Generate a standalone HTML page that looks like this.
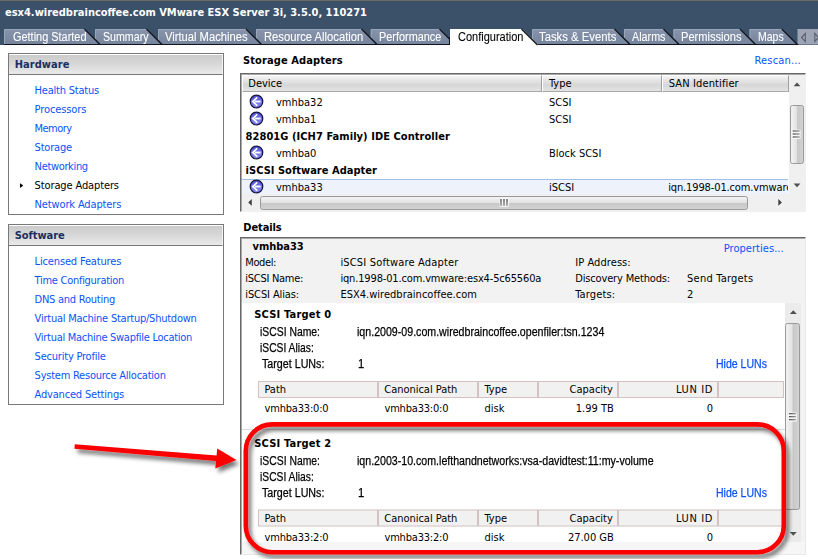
<!DOCTYPE html>
<html><head><meta charset="utf-8"><title>esx4.wiredbraincoffee.com</title>
<style>
html,body{margin:0;padding:0;}
body{width:818px;height:559px;position:relative;overflow:hidden;background:#fff;font-family:"DejaVu Sans Condensed","DejaVu Sans","Liberation Sans",sans-serif;font-size:11px;color:#000;}
.a{position:absolute;white-space:nowrap;line-height:13px;}
.b{font-weight:bold;}
.lk{color:#0c52fa;}
.ar{font-family:"Liberation Sans",sans-serif;font-size:12.5px;transform-origin:0 50%;-webkit-text-stroke:0.25px;}
#hdr{left:0;top:0;width:818px;height:45px;background:#3b5069;border-top:1px solid #6e6a68;box-sizing:border-box;}
.panel{border:1px solid #787878;box-sizing:border-box;background:#fff;}
.ph{left:0;top:0;right:0;height:20px;background:linear-gradient(#ffffff 0,#ffffff 1px,#cbcccb 1.5px,#d6d7d6 50%,#eaeaea 100%);border-bottom:1px solid #787878;border-right:1px solid #f4f4f4;}
.pt{color:#1b2f62;}
.th{background:linear-gradient(#f4f4f4,#d6d6d6 60%,#e4e4e4);box-sizing:border-box;border-right:1px solid #a0a0a0;border-bottom:1px solid #a8a8a8;border-left:1px solid #fff;border-top:1px solid #fff;height:17px;}
.th2{background:#f1f1f1;box-sizing:border-box;border:1px solid #d4c2c2;height:17px;}
</style></head><body>
<div class="a" id="hdr"></div>
<div class="a b" style="left:5px;top:6px;color:#fff">esx4.wiredbraincoffee.com VMware ESX Server 3i, 3.5.0, 110271</div>
<svg class="a" style="left:0;top:0" width="818" height="50" viewBox="0 0 818 50">
<defs><linearGradient id="tg" x1="0" y1="0" x2="0" y2="1"><stop offset="0" stop-color="#8794ab"/><stop offset="1" stop-color="#75839c"/></linearGradient></defs>
<rect x="797.5" y="29" width="21" height="15.5" fill="#9ca4b6"/>
<path d="M805.3 33.5 L801.5 37.5 L805.3 41.5 Z M814.8 33.5 L818.6 37.5 L814.8 41.5 Z" fill="none" stroke="#5a606c" stroke-width="1.1"/>
<path d="M749.5 45 L749.5 29 L782.8 29 L798.3 45 Z" fill="url(#tg)"/>
<path d="M750.0 44 L750.0 29.5 L782.8 29.5" fill="none" stroke="#9aa5b8" stroke-width="1"/>
<path d="M781.8 29 L797.3 44.5" fill="none" stroke="#10141c" stroke-width="1.4"/>
<path d="M749.5 44.5 L798.3 44.5" fill="none" stroke="#10141c" stroke-width="1"/>
<path d="M673.5 45 L673.5 29 L741.0 29 L756.5 45 Z" fill="url(#tg)"/>
<path d="M674.0 44 L674.0 29.5 L741.0 29.5" fill="none" stroke="#9aa5b8" stroke-width="1"/>
<path d="M740.0 29 L755.5 44.5" fill="none" stroke="#10141c" stroke-width="1.4"/>
<path d="M673.5 44.5 L756.5 44.5" fill="none" stroke="#10141c" stroke-width="1"/>
<path d="M624 45 L624 29 L664.5 29 L680.0 45 Z" fill="url(#tg)"/>
<path d="M624.5 44 L624.5 29.5 L664.5 29.5" fill="none" stroke="#9aa5b8" stroke-width="1"/>
<path d="M663.5 29 L679.0 44.5" fill="none" stroke="#10141c" stroke-width="1.4"/>
<path d="M624 44.5 L680.0 44.5" fill="none" stroke="#10141c" stroke-width="1"/>
<path d="M532 45 L532 29 L615.5 29 L631.0 45 Z" fill="url(#tg)"/>
<path d="M532.5 44 L532.5 29.5 L615.5 29.5" fill="none" stroke="#9aa5b8" stroke-width="1"/>
<path d="M614.5 29 L630.0 44.5" fill="none" stroke="#10141c" stroke-width="1.4"/>
<path d="M532 44.5 L631.0 44.5" fill="none" stroke="#10141c" stroke-width="1"/>
<path d="M370.7 45 L370.7 29 L440.5 29 L456.0 45 Z" fill="url(#tg)"/>
<path d="M371.2 44 L371.2 29.5 L440.5 29.5" fill="none" stroke="#9aa5b8" stroke-width="1"/>
<path d="M439.5 29 L455.0 44.5" fill="none" stroke="#10141c" stroke-width="1.4"/>
<path d="M370.7 44.5 L456.0 44.5" fill="none" stroke="#10141c" stroke-width="1"/>
<path d="M256 45 L256 29 L362.5 29 L378.0 45 Z" fill="url(#tg)"/>
<path d="M256.5 44 L256.5 29.5 L362.5 29.5" fill="none" stroke="#9aa5b8" stroke-width="1"/>
<path d="M361.5 29 L377.0 44.5" fill="none" stroke="#10141c" stroke-width="1.4"/>
<path d="M256 44.5 L378.0 44.5" fill="none" stroke="#10141c" stroke-width="1"/>
<path d="M158 45 L158 29 L247.0 29 L262.5 45 Z" fill="url(#tg)"/>
<path d="M158.5 44 L158.5 29.5 L247.0 29.5" fill="none" stroke="#9aa5b8" stroke-width="1"/>
<path d="M246.0 29 L261.5 44.5" fill="none" stroke="#10141c" stroke-width="1.4"/>
<path d="M158 44.5 L262.5 44.5" fill="none" stroke="#10141c" stroke-width="1"/>
<path d="M95 45 L95 29 L147.5 29 L163.0 45 Z" fill="url(#tg)"/>
<path d="M95.5 44 L95.5 29.5 L147.5 29.5" fill="none" stroke="#9aa5b8" stroke-width="1"/>
<path d="M146.5 29 L162.0 44.5" fill="none" stroke="#10141c" stroke-width="1.4"/>
<path d="M95 44.5 L163.0 44.5" fill="none" stroke="#10141c" stroke-width="1"/>
<path d="M4 45 L4 29 L85.5 29 L101.0 45 Z" fill="url(#tg)"/>
<path d="M4.5 44 L4.5 29.5 L85.5 29.5" fill="none" stroke="#9aa5b8" stroke-width="1"/>
<path d="M84.5 29 L100.0 44.5" fill="none" stroke="#10141c" stroke-width="1.4"/>
<path d="M4 44.5 L101.0 44.5" fill="none" stroke="#10141c" stroke-width="1"/>
<path d="M450 46 L450 29 L522.5 29 L539.5 46 Z" fill="#fff"/>
<path d="M521.5 29 L537.5 45" fill="none" stroke="#10141c" stroke-width="1.4"/>
<path d="M449.5 37 L449.5 45" fill="none" stroke="#10141c" stroke-width="1"/>
</svg>
<div class="a ar" style="left:12.5px;top:31px;transform:scaleX(0.8743);color:#fff;-webkit-text-stroke:0.1px">Getting Started</div>
<div class="a ar" style="left:102.5px;top:31px;transform:scaleX(0.8510);color:#fff;-webkit-text-stroke:0.1px">Summary</div>
<div class="a ar" style="left:165px;top:31px;transform:scaleX(0.8949);color:#fff;-webkit-text-stroke:0.1px">Virtual Machines</div>
<div class="a ar" style="left:263.7px;top:31px;transform:scaleX(0.8986);color:#fff;-webkit-text-stroke:0.1px">Resource Allocation</div>
<div class="a ar" style="left:378.7px;top:31px;transform:scaleX(0.8708);color:#fff;-webkit-text-stroke:0.1px">Performance</div>
<div class="a ar" style="left:538.7px;top:31px;transform:scaleX(0.9046);color:#fff;-webkit-text-stroke:0.1px">Tasks &amp; Events</div>
<div class="a ar" style="left:631.5px;top:31px;transform:scaleX(0.8614);color:#fff;-webkit-text-stroke:0.1px">Alarms</div>
<div class="a ar" style="left:681px;top:31px;transform:scaleX(0.8887);color:#fff;-webkit-text-stroke:0.1px">Permissions</div>
<div class="a ar" style="left:757.6px;top:31px;transform:scaleX(0.8409);color:#fff;-webkit-text-stroke:0.1px">Maps</div>
<div class="a ar" style="left:457.5px;top:31px;transform:scaleX(0.8809);color:#000;-webkit-text-stroke:0.1px">Configuration</div>
<div class="a panel" style="left:8px;top:53px;width:216px;height:162px"><div class="a ph"></div></div>
<div class="a b pt" style="left:14.7px;top:57.5px;letter-spacing:0.055px;">Hardware</div>
<div class="a lk" style="left:34.6px;top:84px;letter-spacing:-0.214px;">Health Status</div>
<div class="a lk" style="left:34.6px;top:103px;letter-spacing:-0.118px;">Processors</div>
<div class="a lk" style="left:34.6px;top:122px;letter-spacing:-0.550px;">Memory</div>
<div class="a lk" style="left:34.6px;top:141px;letter-spacing:-0.201px;">Storage</div>
<div class="a lk" style="left:34.6px;top:160px;letter-spacing:-0.347px;">Networking</div>
<div class="a" style="left:34.6px;top:179px;letter-spacing:-0.122px;">Storage Adapters</div>
<svg class="a" style="left:19px;top:182px" width="6" height="8"><path d="M1 1.2 L4.3 3.6 L1 6 Z" fill="#000"/></svg>
<div class="a lk" style="left:34.6px;top:198px;letter-spacing:-0.143px;">Network Adapters</div>
<div class="a panel" style="left:8px;top:224px;width:216px;height:181px"><div class="a ph"></div></div>
<div class="a b pt" style="left:14.7px;top:228.5px;letter-spacing:-0.051px;">Software</div>
<div class="a lk" style="left:34.6px;top:255px;letter-spacing:-0.152px;">Licensed Features</div>
<div class="a lk" style="left:34.6px;top:274px;letter-spacing:-0.279px;">Time Configuration</div>
<div class="a lk" style="left:34.6px;top:293px;letter-spacing:-0.251px;">DNS and Routing</div>
<div class="a lk" style="left:34.6px;top:312px;letter-spacing:-0.233px;">Virtual Machine Startup/Shutdown</div>
<div class="a lk" style="left:34.6px;top:331px;letter-spacing:-0.285px;">Virtual Machine Swapfile Location</div>
<div class="a lk" style="left:34.6px;top:350px;letter-spacing:-0.214px;">Security Profile</div>
<div class="a lk" style="left:34.6px;top:369px;letter-spacing:-0.239px;">System Resource Allocation</div>
<div class="a lk" style="left:34.6px;top:388px;letter-spacing:-0.188px;">Advanced Settings</div>
<div class="a b" style="left:243px;top:54px;letter-spacing:0.104px;">Storage Adapters</div>
<div class="a lk" style="left:754.5px;top:54px;letter-spacing:0.171px;">Rescan...</div>
<div class="a" style="left:240px;top:73px;width:566px;height:139px;box-sizing:border-box;border:1px solid #e8e8e8;border-top:1px solid #696969;border-left:1px solid #696969;background:#fff"></div>
<div class="a" style="left:241px;top:74px;width:564px;height:137px;box-sizing:border-box;border-top:1px solid #a8a8a8;border-left:1px solid #a8a8a8;"></div>
<div class="a th" style="left:242px;top:75px;width:300px"></div>
<div class="a th" style="left:542px;top:75px;width:120px"></div>
<div class="a th" style="left:662px;top:75px;width:127px"></div>
<div class="a" style="left:248.3px;top:77px;">Device</div>
<div class="a" style="left:549px;top:77px;">Type</div>
<div class="a" style="left:668.7px;top:77px;letter-spacing:0.124px;">SAN Identifier</div>
<div class="a" style="left:242px;top:179px;width:546px;height:15px;box-sizing:border-box;background:#edf2fb;border-top:1px solid #9fbfe6;"></div>
<svg class="a" style="left:249.1px;top:94px" width="15" height="15" viewBox="0 0 15 15"><defs><linearGradient id="ig" x1="0" y1="0" x2="0" y2="1"><stop offset="0" stop-color="#5252d8"/><stop offset="1" stop-color="#8c8cf8"/></linearGradient></defs><circle cx="7.5" cy="7.5" r="6.3" fill="url(#ig)" stroke="#15153c" stroke-width="1.2"/><path d="M8.3 3.4 L3.8 7.5 L8.3 11.6" fill="none" stroke="#fff" stroke-width="1.7"/><path d="M6 7.5 L11.6 7.5" stroke="#fff" stroke-width="1.9"/></svg>
<div class="a" style="left:276px;top:96px;">vmhba32</div>
<div class="a" style="left:549px;top:96px;">SCSI</div>
<svg class="a" style="left:249.1px;top:111px" width="15" height="15" viewBox="0 0 15 15"><defs><linearGradient id="ig" x1="0" y1="0" x2="0" y2="1"><stop offset="0" stop-color="#5252d8"/><stop offset="1" stop-color="#8c8cf8"/></linearGradient></defs><circle cx="7.5" cy="7.5" r="6.3" fill="url(#ig)" stroke="#15153c" stroke-width="1.2"/><path d="M8.3 3.4 L3.8 7.5 L8.3 11.6" fill="none" stroke="#fff" stroke-width="1.7"/><path d="M6 7.5 L11.6 7.5" stroke="#fff" stroke-width="1.9"/></svg>
<div class="a" style="left:276px;top:113px;">vmhba1</div>
<div class="a" style="left:549px;top:113px;">SCSI</div>
<svg class="a" style="left:249.1px;top:145px" width="15" height="15" viewBox="0 0 15 15"><defs><linearGradient id="ig" x1="0" y1="0" x2="0" y2="1"><stop offset="0" stop-color="#5252d8"/><stop offset="1" stop-color="#8c8cf8"/></linearGradient></defs><circle cx="7.5" cy="7.5" r="6.3" fill="url(#ig)" stroke="#15153c" stroke-width="1.2"/><path d="M8.3 3.4 L3.8 7.5 L8.3 11.6" fill="none" stroke="#fff" stroke-width="1.7"/><path d="M6 7.5 L11.6 7.5" stroke="#fff" stroke-width="1.9"/></svg>
<div class="a" style="left:276px;top:147px;">vmhba0</div>
<div class="a" style="left:549px;top:147px;">Block SCSI</div>
<svg class="a" style="left:249.1px;top:179px" width="15" height="15" viewBox="0 0 15 15"><defs><linearGradient id="ig" x1="0" y1="0" x2="0" y2="1"><stop offset="0" stop-color="#5252d8"/><stop offset="1" stop-color="#8c8cf8"/></linearGradient></defs><circle cx="7.5" cy="7.5" r="6.3" fill="url(#ig)" stroke="#15153c" stroke-width="1.2"/><path d="M8.3 3.4 L3.8 7.5 L8.3 11.6" fill="none" stroke="#fff" stroke-width="1.7"/><path d="M6 7.5 L11.6 7.5" stroke="#fff" stroke-width="1.9"/></svg>
<div class="a" style="left:276px;top:181px;">vmhba33</div>
<div class="a" style="left:549px;top:181px;">iSCSI</div>
<div class="a" style="left:668.2px;top:181px;width:119.8px;overflow:hidden;letter-spacing:-0.13px">iqn.1998-01.com.vmware:esx4</div>
<div class="a b" style="left:245.6px;top:130px;letter-spacing:0.057px;">82801G (ICH7 Family) IDE Controller</div>
<div class="a b" style="left:245.6px;top:164px;letter-spacing:0.022px;">iSCSI Software Adapter</div>
<div class="a" style="left:789px;top:75px;width:17px;height:119px;background:#f0f0f0"></div>
<div class="a" style="left:789.5px;top:105px;width:14.5px;height:58.5px;box-sizing:border-box;border:1px solid #9a9a9a;border-radius:2.5px;background:linear-gradient(90deg,#f2f2f2,#e4e4e4 45%,#c8c8c8 55%,#d2d2d2)"></div>
<svg class="a" style="left:789px;top:75px" width="17" height="119" viewBox="0 0 17 119"><path d="M4.6 11.2 L8 7.6 L11.4 11.2 Z M4.6 108.6 L8 112.2 L11.4 108.6 Z" fill="#505050"/><defs><linearGradient id="gg" gradientUnits="userSpaceOnUse" x1="3.7" y1="0" x2="10.7" y2="0"><stop offset="0" stop-color="#1c1c1c"/><stop offset="1" stop-color="#808080"/></linearGradient></defs><rect x="2.7" y="54.5" width="9" height="9.5" rx="1.5" fill="#fff" opacity="0.75"/><path d="M3.7 56 H10.7 M3.7 59 H10.7 M3.7 62 H10.7" stroke="url(#gg)" stroke-width="1.1"/></svg>
<div class="a" style="left:242px;top:194px;width:564px;height:17.5px;background:#f0f0f0"></div>
<div class="a" style="left:260px;top:195.5px;width:488px;height:14px;box-sizing:border-box;border:1px solid #9a9a9a;border-radius:2.5px;background:linear-gradient(#f2f2f2,#e4e4e4 45%,#c8c8c8 55%,#d2d2d2)"></div>
<svg class="a" style="left:242px;top:194px" width="547" height="17" viewBox="0 0 547 17"><path d="M9.8 5 L6.2 8.4 L9.8 11.8 Z M536.3 5 L539.9 8.4 L536.3 11.8 Z" fill="#404040"/><defs><linearGradient id="gv" gradientUnits="userSpaceOnUse" x1="0" y1="5" x2="0" y2="12"><stop offset="0" stop-color="#1c1c1c"/><stop offset="1" stop-color="#808080"/></linearGradient></defs><rect x="257.5" y="4.0" width="9.5" height="9" rx="1.5" fill="#fff" opacity="0.75"/><path d="M259 5.0 V12.0 M262 5.0 V12.0 M265 5.0 V12.0" stroke="url(#gv)" stroke-width="1.1"/></svg>
<div class="a b" style="left:243.3px;top:221px;letter-spacing:-0.103px;">Details</div>
<div class="a" style="left:240px;top:237px;width:566px;height:318px;box-sizing:border-box;border:1px solid #e8e8e8;border-top:1px solid #696969;border-left:1px solid #696969;background:#f2f2f2"></div>
<div class="a" style="left:241px;top:238px;width:564px;height:316px;box-sizing:border-box;border-top:1px solid #a8a8a8;border-left:1px solid #a8a8a8;"></div>
<div class="a" style="left:242px;top:303px;width:543px;height:239px;background:#fff"></div>
<div class="a" style="left:242px;top:542px;width:563px;height:12px;background:#f6f6f6"></div>
<div class="a b" style="left:252.6px;top:240px;letter-spacing:-0.057px;">vmhba33</div>
<div class="a" style="left:245.3px;top:256px;letter-spacing:-0.409px;">Model:</div>
<div class="a" style="left:340.4px;top:256px;letter-spacing:0.179px;">iSCSI Software Adapter</div>
<div class="a" style="left:245.3px;top:272px;letter-spacing:-0.281px;">iSCSI Name:</div>
<div class="a" style="left:340.4px;top:272px;letter-spacing:-0.154px;">iqn.1998-01.com.vmware:esx4-5c65560a</div>
<div class="a" style="left:245.3px;top:288px;letter-spacing:-0.118px;">iSCSI Alias:</div>
<div class="a" style="left:340.4px;top:288px;letter-spacing:0.017px;">ESX4.wiredbraincoffee.com</div>
<div class="a" style="left:575.2px;top:256px;letter-spacing:0.077px;">IP Address:</div>
<div class="a" style="left:575.2px;top:272px;letter-spacing:-0.155px;">Discovery Methods:</div>
<div class="a" style="left:687.1px;top:272px;letter-spacing:0.214px;">Send Targets</div>
<div class="a" style="left:575.2px;top:288px;letter-spacing:0.158px;">Targets:</div>
<div class="a" style="left:687.1px;top:288px;">2</div>
<div class="a lk" style="left:723.7px;top:242px;letter-spacing:0.051px;">Properties...</div>
<div class="a" style="left:785px;top:303px;width:16px;height:239px;background:#ebebeb"></div>
<div class="a" style="left:785.3px;top:323.3px;width:14.4px;height:187px;box-sizing:border-box;border:1px solid #9a9a9a;border-radius:2.5px;background:linear-gradient(90deg,#f2f2f2,#e4e4e4 45%,#c8c8c8 55%,#d2d2d2)"></div>
<svg class="a" style="left:785px;top:303px" width="16" height="239" viewBox="0 0 16 239"><path d="M4.8 11 L8.3 7.2 L11.8 11 Z M4.8 229 L8.3 232.8 L11.8 229 Z" fill="#505050"/><defs><linearGradient id="gg2" gradientUnits="userSpaceOnUse" x1="3.9" y1="0" x2="10.9" y2="0"><stop offset="0" stop-color="#1c1c1c"/><stop offset="1" stop-color="#808080"/></linearGradient></defs><rect x="2.9000000000000004" y="109.3" width="9" height="9.5" rx="1.5" fill="#fff" opacity="0.75"/><path d="M3.9000000000000004 110.8 H10.9 M3.9000000000000004 113.8 H10.9 M3.9000000000000004 116.8 H10.9" stroke="url(#gg2)" stroke-width="1.1"/></svg>
<div class="a b" style="left:254.3px;top:308px;letter-spacing:0.186px;">SCSI Target 0</div>
<div class="a ar" style="left:260.3px;top:326px;transform:scaleX(0.8304);">iSCSI Name:</div>
<div class="a ar" style="left:356.6px;top:326px;transform:scaleX(0.8501);">iqn.2009-09.com.wiredbraincoffee.openfiler:tsn.1234</div>
<div class="a ar" style="left:260.3px;top:342px;transform:scaleX(0.8235);">iSCSI Alias:</div>
<div class="a ar" style="left:262px;top:358px;transform:scaleX(0.8555);">Target LUNs:</div>
<div class="a ar" style="left:358.3px;top:358px;transform:scaleX(0.9000);">1</div>
<div class="a ar lk" style="left:715.6px;top:358px;transform:scaleX(0.8436);">Hide LUNs</div>
<div class="a th2" style="left:258px;top:381px;width:120px"></div>
<div class="a th2" style="left:378px;top:381px;width:100px"></div>
<div class="a th2" style="left:478px;top:381px;width:60px"></div>
<div class="a th2" style="left:538px;top:381px;width:80px"></div>
<div class="a th2" style="left:618px;top:381px;width:100px"></div>
<div class="a th2" style="left:718px;top:381px;width:66px"></div>
<div class="a" style="left:264.4px;top:383px;">Path</div>
<div class="a" style="left:384.3px;top:383px;letter-spacing:-0.031px;">Canonical Path</div>
<div class="a" style="left:484.5px;top:383px;">Type</div>
<div class="a" style="right:205.20px;top:383px;">Capacity</div>
<div class="a" style="left:676px;top:383px;letter-spacing:0.617px;">LUN ID</div>
<div class="a" style="left:264.6px;top:402px;letter-spacing:-0.197px;">vmhba33:0:0</div>
<div class="a" style="left:384.5px;top:402px;letter-spacing:-0.197px;">vmhba33:0:0</div>
<div class="a" style="left:484.5px;top:402px;">disk</div>
<div class="a" style="right:204.20px;top:402px;">1.99 TB</div>
<div class="a" style="right:105.00px;top:402px;">0</div>
<div class="a" style="left:242px;top:429px;width:543px;height:1px;background:#dadada"></div>
<div class="a" style="left:0;top:0;width:818px;height:559px;transform:translateY(0.5px)">
<div class="a b" style="left:254.3px;top:436px;letter-spacing:0.186px;">SCSI Target 2</div>
<div class="a ar" style="left:260.3px;top:454px;transform:scaleX(0.8304);">iSCSI Name:</div>
<div class="a ar" style="left:356.6px;top:454px;transform:scaleX(0.8493);">iqn.2003-10.com.lefthandnetworks:vsa-davidtest:11:my-volume</div>
<div class="a ar" style="left:260.3px;top:470px;transform:scaleX(0.8235);">iSCSI Alias:</div>
<div class="a ar" style="left:262px;top:486px;transform:scaleX(0.8555);">Target LUNs:</div>
<div class="a ar" style="left:358.3px;top:486px;transform:scaleX(0.9000);">1</div>
<div class="a ar lk" style="left:715.6px;top:486px;transform:scaleX(0.8436);">Hide LUNs</div>
<div class="a th2" style="left:258px;top:509px;width:120px"></div>
<div class="a th2" style="left:378px;top:509px;width:100px"></div>
<div class="a th2" style="left:478px;top:509px;width:60px"></div>
<div class="a th2" style="left:538px;top:509px;width:80px"></div>
<div class="a th2" style="left:618px;top:509px;width:100px"></div>
<div class="a th2" style="left:718px;top:509px;width:66px"></div>
<div class="a" style="left:264.4px;top:511px;">Path</div>
<div class="a" style="left:384.3px;top:511px;letter-spacing:-0.031px;">Canonical Path</div>
<div class="a" style="left:484.5px;top:511px;">Type</div>
<div class="a" style="right:205.20px;top:511px;">Capacity</div>
<div class="a" style="left:676px;top:511px;letter-spacing:0.617px;">LUN ID</div>
<div class="a" style="left:264.6px;top:530px;letter-spacing:-0.197px;">vmhba33:2:0</div>
<div class="a" style="left:384.5px;top:530px;letter-spacing:-0.197px;">vmhba33:2:0</div>
<div class="a" style="left:484.5px;top:530px;">disk</div>
<div class="a" style="right:204.20px;top:530px;">27.00 GB</div>
<div class="a" style="right:105.00px;top:530px;">0</div>
</div>
<svg class="a" style="left:0;top:0" width="818" height="559" viewBox="0 0 818 559">
<defs><filter id="sh" x="-10%" y="-20%" width="120%" height="150%"><feGaussianBlur in="SourceAlpha" stdDeviation="2.2"/><feOffset dx="3" dy="4.3" result="o"/><feComponentTransfer><feFuncA type="linear" slope="0.55"/></feComponentTransfer><feMerge><feMergeNode/><feMergeNode in="SourceGraphic"/></feMerge></filter></defs>
<g filter="url(#sh)">
<rect x="245.8" y="424.4" width="538" height="127.8" rx="26.5" ry="26.5" fill="none" stroke="#fb0505" stroke-width="4.6"/>
<path d="M74.8 444.3 L216.6 455.6 L217.2 448.6 L236.4 459.9 L215.3 468.6 L216 460.9 L74.4 448.7 Z" fill="#fb0505"/>
</g></svg>
</body></html>
